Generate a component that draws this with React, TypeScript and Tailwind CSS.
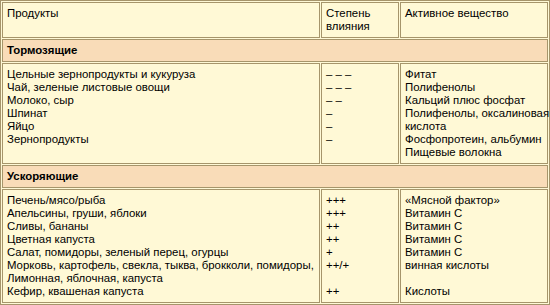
type Row = { products: string[]; degree: string[]; active: string[] };

const inhibitors: Row = {
  products: [
    'Цельные зернопродукты и кукуруза',
    'Чай, зеленые листовые овощи',
    'Молоко, сыр',
    'Шпинат',
    'Яйцо',
    'Зернопродукты',
  ],
  degree: ['– – –', '– – –', '– –', '–', '–', '–'],
  active: [
    'Фитат',
    'Полифенолы',
    'Кальций плюс фосфат',
    'Полифенолы, оксалиновая',
    'кислота',
    'Фосфопротеин, альбумин',
    'Пищевые волокна',
  ],
};

const enhancers: Row = {
  products: [
    'Печень/мясо/рыба',
    'Апельсины, груши, яблоки',
    'Сливы, бананы',
    'Цветная капуста',
    'Салат, помидоры, зеленый перец, огурцы',
    'Морковь, картофель, свекла, тыква, брокколи, помидоры,',
    'Лимонная, яблочная, капуста',
    'Кефир, квашеная капуста',
  ],
  degree: ['+++', '+++', '++', '++', '+', '++/+', '\u00a0', '++'],
  active: [
    '«Мясной фактор»',
    'Витамин С',
    'Витамин С',
    'Витамин С',
    'Витамин С',
    'винная кислоты',
    '\u00a0',
    'Кислоты',
  ],
};

// shared cell look: thin olive border, 4px padding, text at top-left
const cell = 'border border-[#a6956b] p-[4px] align-top text-left';

function Lines({ items }: { items: string[] }) {
  return (
    <>
      {items.map((t, i) => (
        <div key={i} className="whitespace-nowrap">
          {t}
        </div>
      ))}
    </>
  );
}

function Section({ title }: { title: string }) {
  return (
    <tr>
      <td colSpan={3} className={`${cell} bg-[#f9dcb8] font-bold`}>
        {title}
      </td>
    </tr>
  );
}

function Body({ row }: { row: Row }) {
  return (
    <tr>
      <td className={`${cell} font-normal`}>
        <Lines items={row.products} />
      </td>
      <td className={`${cell} font-normal`}>
        <Lines items={row.degree} />
      </td>
      <td className={`${cell} font-normal`}>
        <Lines items={row.active} />
      </td>
    </tr>
  );
}

export default function App() {
  return (
    <div className="w-[550px] h-[305px] bg-white overflow-hidden">
      <table
        className="w-[550px] table-fixed border-separate border-spacing-[1px] border border-[#a6956b] bg-[#fff9d6] text-[11.4px] leading-[13px] text-black"
        style={{ fontFamily: '"Liberation Sans", Arial, sans-serif' }}
      >
        <colgroup>
          <col className="w-[318px]" />
          <col className="w-[78px]" />
          <col className="w-[148px]" />
        </colgroup>
        <tbody>
          <tr>
            <th className={`${cell} font-normal`}>Продукты</th>
            <th className={`${cell} font-normal`}>
              Степень
              <br />
              влияния
            </th>
            <th className={`${cell} font-normal`}>Активное вещество</th>
          </tr>
          <Section title="Тормозящие" />
          <Body row={inhibitors} />
          <Section title="Ускоряющие" />
          <Body row={enhancers} />
        </tbody>
      </table>
    </div>
  );
}
